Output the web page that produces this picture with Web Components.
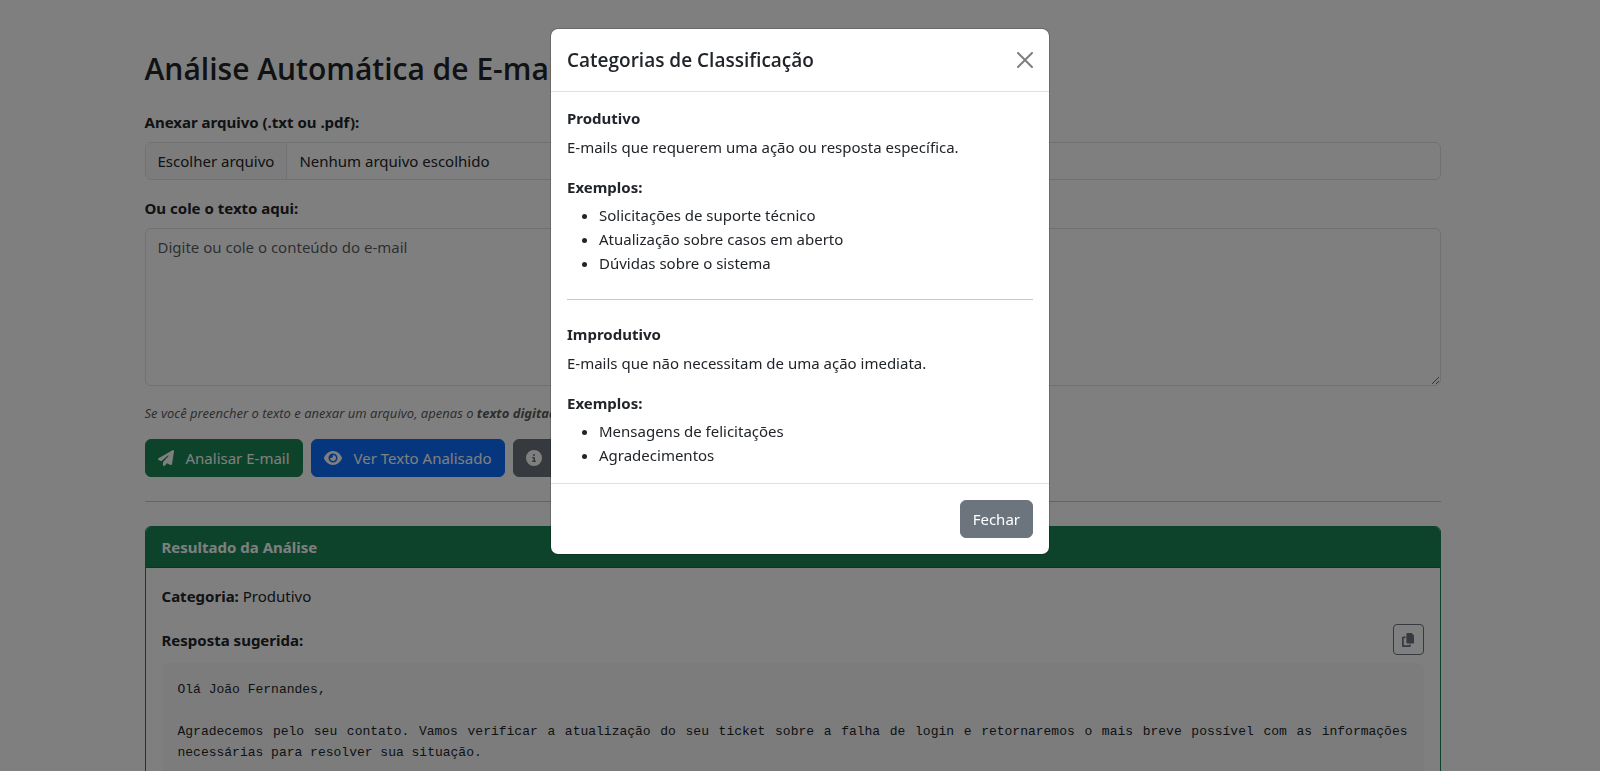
<!DOCTYPE html>
<html lang="pt-BR">
<head>
<meta charset="utf-8">
<meta name="viewport" content="width=device-width, initial-scale=1">
<title>Análise Automática de E-mails</title>
<style>
  :root {
    --ink: #212529;
    --line: #dee2e6;
    --green: #198754;
    --blue: #0d6efd;
    --gray: #6c757d;
    --display: "Open Sans", "Noto Sans", sans-serif;
    --mono: "Liberation Mono", monospace;
  }
  html, body { height: 100%; }
  body {
    margin: 0;
    padding-right: 15px;
    box-sizing: border-box;
    overflow: hidden;
    background: #fff;
    color: var(--ink);
    font: 400 15px/24px "Noto Sans", sans-serif;
  }
</style>
</head>
<body>
<email-analyzer></email-analyzer>

<app-modal heading="Categorias de Classificação">
  <category-info name="Produtivo">
    E-mails que requerem uma ação ou resposta específica.
    <span slot="example">Solicitações de suporte técnico</span>
    <span slot="example">Atualização sobre casos em aberto</span>
    <span slot="example">Dúvidas sobre o sistema</span>
  </category-info>
  <app-rule></app-rule>
  <category-info name="Improdutivo">
    E-mails que não necessitam de uma ação imediata.
    <span slot="example">Mensagens de felicitações</span>
    <span slot="example">Agradecimentos</span>
  </category-info>
</app-modal>

<script>
const ICONS = {
  send: ['0 0 512 512', 'M498.1 5.6c10.1 7 15.4 19.1 13.5 31.2l-64 416c-1.5 9.7-7.4 18.2-16 23s-18.9 5.4-28 1.6L284 427.7l-68.5 74.1c-8.9 9.7-22.9 12.9-35.2 8.1S160 493.2 160 480V396.4c0-4 1.5-7.8 4.2-10.7L331.8 202.8c5.8-6.3 5.6-16-.4-22s-15.7-6.4-22-.7L106 360.8 17.7 316.6C7.1 311.3 .3 300.7 0 288.9s5.9-22.8 16.1-28.7l448-256c10.7-6.1 23.9-5.5 34 1.4z'],
  eye: ['0 0 576 512', 'M288 32c-80.8 0-145.5 36.8-192.6 80.6C48.6 156 17.3 208 2.5 243.7c-3.3 7.9-3.3 16.7 0 24.6C17.3 304 48.6 356 95.4 399.4C142.5 443.2 207.2 480 288 480s145.5-36.8 192.6-80.6c46.8-43.5 78.1-95.4 93-131.1c3.3-7.9 3.3-16.7 0-24.6c-14.9-35.7-46.2-87.7-93-131.1C433.5 68.8 368.8 32 288 32zM144 256a144 144 0 1 1 288 0 144 144 0 1 1 -288 0zm144-64c0 35.3-28.7 64-64 64c-7.1 0-13.9-1.2-20.3-3.3c-5.5-1.8-11.9 1.6-11.7 7.4c.3 6.9 1.3 13.8 3.2 20.7c13.7 51.2 66.4 81.6 117.6 67.9s81.6-66.4 67.9-117.6c-11.1-41.5-47.8-69.4-88.6-71.1c-5.8-.2-9.2 6.1-7.4 11.7c2.1 6.4 3.3 13.2 3.3 20.3z'],
  info: ['0 0 512 512', 'M256 512A256 256 0 1 0 256 0a256 256 0 1 0 0 512zM216 336h24V272H216c-13.3 0-24-10.7-24-24s10.7-24 24-24h48c13.3 0 24 10.7 24 24v88h8c13.3 0 24 10.7 24 24s-10.7 24-24 24H216c-13.3 0-24-10.7-24-24s10.7-24 24-24zm40-208a32 32 0 1 1 0 64 32 32 0 1 1 0-64z'],
  copy: ['0 0 448 512', 'M208 0H332.1c12.7 0 24.9 5.1 33.9 14.1l67.9 67.9c9 9 14.1 21.2 14.1 33.9V336c0 26.5-21.5 48-48 48H208c-26.5 0-48-21.5-48-48V48c0-26.5 21.5-48 48-48zM48 128h80v64H64V448H256V416h64v48c0 26.5-21.5 48-48 48H48c-26.5 0-48-21.5-48-48V176c0-26.5 21.5-48 48-48z'],
  close: ['0 0 16 16', 'M.293.293a1 1 0 0 1 1.414 0L8 6.586 14.293.293a1 1 0 1 1 1.414 1.414L9.414 8l6.293 6.293a1 1 0 0 1-1.414 1.414L8 9.414l-6.293 6.293a1 1 0 0 1-1.414-1.414L6.586 8 .293 1.707a1 1 0 0 1 0-1.414z'],
};

const define = (name, render, after) => customElements.define(name, class extends HTMLElement {
  connectedCallback() {
    if (this.shadowRoot) return;
    this.attachShadow({ mode: 'open' }).innerHTML = render(this);
    if (after) after(this, this.shadowRoot);
  }
});

define('app-icon', el => {
  const [box, d] = ICONS[el.getAttribute('name')];
  return `
  <style>
    :host { display: block; }
    svg { display: block; height: var(--icon-size, 16px); fill: currentColor; }
  </style>
  <svg viewBox="${box}" aria-hidden="true"><path d="${d}"/></svg>`;
});

define('app-rule', () => `
  <style>
    :host { display: block; }
    hr { margin: 24px 0; border: 0; border-top: 1px solid var(--ink); opacity: .25; }
  </style>
  <hr>`);

define('app-button', el => `
  <style>
    :host { display: block; --tone: var(--gray); }
    :host([tone="green"]) { --tone: var(--green); }
    :host([tone="blue"]) { --tone: var(--blue); }
    button {
      display: flex; align-items: center; gap: 12px;
      margin: 0; padding: 6px 12px;
      border: 1px solid var(--tone); border-radius: 6px;
      background: var(--tone); color: #fff;
      font: inherit; white-space: nowrap; cursor: pointer;
    }
    :host([outline]) button {
      --icon-size: 14px;
      justify-content: center; width: 31px; height: 31px; padding: 0;
      border-radius: 4px; background: none; color: var(--tone);
    }
  </style>
  <button type="button" ${el.hasAttribute('label') ? `aria-label="${el.getAttribute('label')}"` : ''}>
    ${el.hasAttribute('icon') ? `<app-icon name="${el.getAttribute('icon')}"></app-icon>` : ''}<slot></slot>
  </button>`);

define('file-field', () => `
  <style>
    :host { display: block; margin-bottom: 16px; }
    .caption { display: block; margin-bottom: 8px; font-weight: 700; }
    .control {
      position: relative; display: flex; overflow: hidden;
      border: 1px solid var(--line); border-radius: 6px; cursor: pointer;
    }
    .control span { padding: 6px 12px; }
    .pick { background: #f8f9fa; border-right: 1px solid var(--line); }
    input { position: absolute; inset: 0; opacity: 0; cursor: pointer; }
  </style>
  <label class="caption" for="file">Anexar arquivo (.txt ou .pdf):</label>
  <div class="control">
    <span class="pick">Escolher arquivo</span>
    <span class="name">Nenhum arquivo escolhido</span>
    <input id="file" type="file" accept=".txt,.pdf">
  </div>`,
  (el, root) => {
    const input = root.querySelector('input');
    input.addEventListener('change', () => {
      root.querySelector('.name').textContent = input.files[0]?.name ?? 'Nenhum arquivo escolhido';
    });
  });

define('text-field', () => `
  <style>
    :host { display: block; margin-bottom: 16px; }
    label { display: block; margin-bottom: 8px; font-weight: 700; }
    textarea {
      display: block; box-sizing: border-box; width: 100%; margin: 0; padding: 6px 12px;
      border: 1px solid var(--line); border-radius: 6px; background: #fff;
      color: inherit; font: inherit; resize: vertical;
    }
    textarea::placeholder { color: rgba(33, 37, 41, .75); }
  </style>
  <label for="text">Ou cole o texto aqui:</label>
  <textarea id="text" rows="6" placeholder="Digite ou cole o conteúdo do e-mail"></textarea>`);

define('result-card', () => `
  <style>
    :host { display: block; border: 1px solid var(--green); border-radius: 6px; background: #fff; overflow: hidden; }
    header {
      padding: 8px 16px; background: var(--green); color: #fff; font-weight: 700;
      border-bottom: 1px solid rgba(0, 0, 0, .175);
    }
    .body { padding: 16px; }
    p { margin: 0 0 16px; }
    .row { display: flex; justify-content: space-between; align-items: center; margin-bottom: 8px; }
    pre {
      margin: 0; padding: 16px; border-radius: 6px; background: #f8f9fa;
      font: 13px/21px var(--mono); white-space: pre-wrap; text-align: justify;
    }
  </style>
  <header>Resultado da Análise</header>
  <div class="body">
    <p><strong>Categoria:</strong> <slot name="category"></slot></p>
    <div class="row">
      <strong>Resposta sugerida:</strong>
      <app-button outline icon="copy" label="Copiar resposta"></app-button>
    </div>
    <pre><slot></slot></pre>
  </div>`);

define('email-analyzer', () => `
  <style>
    :host { display: block; box-sizing: border-box; max-width: 1320px; margin: 0 auto; padding: 48px 12px; }
    h1 { margin: 0 0 20px; font: 600 30px/42px var(--display); }
    .hint { margin: 0 0 15px; font-size: 13px; line-height: 22px; font-style: italic; color: rgba(33, 37, 41, .75); }
    .actions { display: flex; gap: 8px; }
  </style>
  <h1>Análise Automática de E-mails</h1>
  <file-field></file-field>
  <text-field></text-field>
  <p class="hint">Se você preencher o texto e anexar um arquivo, apenas o <strong>texto digitado</strong> será analisado.</p>
  <div class="actions">
    <app-button tone="green" icon="send">Analisar E-mail</app-button>
    <app-button tone="blue" icon="eye">Ver Texto Analisado</app-button>
    <app-button icon="info">Categorias</app-button>
  </div>
  <app-rule></app-rule>
  <result-card><span slot="category">Produtivo</span>Olá João Fernandes,

Agradecemos pelo seu contato. Vamos verificar a atualização do seu ticket sobre a falha de login e retornaremos o mais breve possível com as informações necessárias para resolver sua situação.</result-card>`);

define('category-info', el => `
  <style>
    :host { display: block; }
    h3 { margin: 0 0 7px; font-size: 15px; line-height: 20px; font-weight: 700; }
    p { margin: 0 0 16px; }
    strong { display: block; }
    ul { margin: 4px 0 0; padding-left: 32px; }
  </style>
  <h3>${el.getAttribute('name')}</h3>
  <p><slot></slot></p>
  <strong>Exemplos:</strong>
  <ul></ul>`,
  (el, root) => {
    const list = root.querySelector('ul');
    el.querySelectorAll('[slot="example"]').forEach((item, i) => {
      item.slot = 'example-' + i;
      const li = document.createElement('li');
      li.innerHTML = `<slot name="${item.slot}"></slot>`;
      list.append(li);
    });
  });

define('app-modal', el => `
  <style>
    :host {
      position: fixed; inset: 0; z-index: 10; display: block; overflow: hidden auto;
      background: rgba(0, 0, 0, .5);
    }
    :host([hidden]) { display: none; }
    .dialog {
      box-sizing: border-box; max-width: 500px; margin: 28px auto;
      border: 1px solid rgba(0, 0, 0, .175); border-radius: 8px;
      background: #fff; background-clip: padding-box;
    }
    header {
      display: flex; justify-content: space-between; align-items: center;
      padding: 16px; border-bottom: 1px solid var(--line);
    }
    h2 { margin: 0; font: 600 19px/30px var(--display); }
    .close {
      --icon-size: 16px;
      margin: 0; padding: 0; border: 0; background: none; color: #000; opacity: .5; cursor: pointer;
    }
    .body { padding: 16px; }
    footer { display: flex; justify-content: flex-end; padding: 16px; border-top: 1px solid var(--line); }
  </style>
  <div class="dialog" role="dialog" aria-modal="true" aria-labelledby="title">
    <header>
      <h2 id="title">${el.getAttribute('heading')}</h2>
      <button class="close" type="button" aria-label="Fechar"><app-icon name="close"></app-icon></button>
    </header>
    <div class="body"><slot></slot></div>
    <footer><app-button class="dismiss">Fechar</app-button></footer>
  </div>`,
  (el, root) => {
    root.querySelectorAll('.close, .dismiss').forEach(b => b.addEventListener('click', () => { el.hidden = true; }));
  });
</script>
</body>
</html>
